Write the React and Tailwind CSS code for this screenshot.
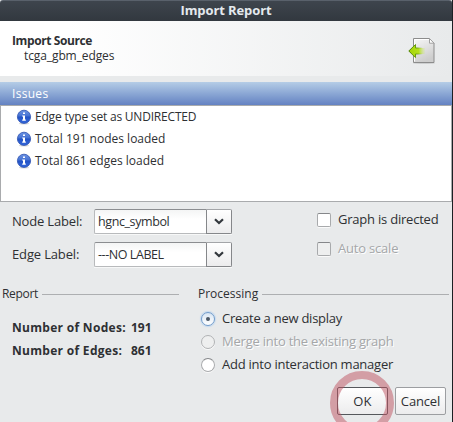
const ISSUES = [
  { text: "Edge type set as UNDIRECTED", cls: "tracking-[-0.2px]" },
  { text: "Total 191 nodes loaded", cls: "" },
  { text: "Total 861 edges loaded", cls: "" },
];

function ImportIcon() {
  return (
    <svg width="28" height="28" viewBox="0 0 28 28" className="shrink-0">
      <defs>
        <linearGradient id="page" x1="0" y1="0" x2="0.4" y2="1">
          <stop offset="0" stopColor="#f8f8f8" />
          <stop offset="1" stopColor="#cdcdcd" />
        </linearGradient>
        <linearGradient id="arrow" x1="0" y1="0" x2="1" y2="0">
          <stop offset="0" stopColor="#a4d407" />
          <stop offset="0.6" stopColor="#b4e01a" />
          <stop offset="1" stopColor="#c9e860" stopOpacity="0.1" />
        </linearGradient>
        <linearGradient id="edge" x1="0" y1="0" x2="1" y2="0">
          <stop offset="0" stopColor="#4e8207" />
          <stop offset="0.5" stopColor="#6fa010" />
          <stop offset="0.85" stopColor="#8fb83a" stopOpacity="0" />
        </linearGradient>
      </defs>
      <ellipse cx="16" cy="26.2" rx="11" ry="0.9" fill="#000" opacity="0.12" />
      <path d="M5.5 1.5H21.5L26 6V25.5H5.5Z" fill="url(#page)" stroke="#8c8c8c" />
      <path d="M6.5 24.5V2.5H21" fill="none" stroke="#fff" />
      <path d="M21.5 1.5V6.2H26Z" fill="#fff" stroke="#a0a0a0" />
      <path d="M0.8 14L7.5 7.5V11H17V17H7.5V20.6Z" fill="url(#arrow)" stroke="url(#edge)" strokeLinejoin="round" />
    </svg>
  );
}

function InfoIcon() {
  return (
    <svg width="16" height="16" viewBox="0 0 16 16" className="shrink-0">
      <defs>
        <linearGradient id="info" x1="0" y1="0" x2="0" y2="1">
          <stop offset="0" stopColor="#6c93e2" />
          <stop offset="0.45" stopColor="#4471d3" />
          <stop offset="0.5" stopColor="#2453c4" />
          <stop offset="1" stopColor="#3468dc" />
        </linearGradient>
      </defs>
      <ellipse cx="8" cy="14.6" rx="5" ry="1" fill="#000" opacity="0.15" />
      <circle cx="8" cy="7.8" r="6.6" fill="url(#info)" stroke="#2a4fae" strokeWidth="0.8" />
      <path d="M7 3.4H9V5H7ZM6.2 6.4H9V10.6H9.8V11.8H6.2V10.6H7V7.6H6.2Z" fill="#fff" />
    </svg>
  );
}

function Combo({ value, className }) {
  return (
    <div className="flex h-[25px] w-[138px] shadow-[0_1px_0_#f7f8f8]">
      <div className="flex w-28 items-center rounded-l-[2px] border border-r-0 border-[#b8babc] border-t-[#8b8d90] bg-linear-to-b from-[#f4f5f5] to-white to-40% pl-[3px]">
        <span className={className}>{value}</span>
      </div>
      <div className="flex flex-1 items-center justify-center rounded-r-[2px] border border-[#85878a] border-t-[#a3a5a8] bg-linear-to-b from-white to-[#ececed]">
        <svg width="10" height="7" viewBox="0 0 10 7">
          <path d="M1 1.2L5 5L9 1.2" fill="none" stroke="#33383d" strokeWidth="2.2" />
        </svg>
      </div>
    </div>
  );
}

function Check({ label, disabled, className }) {
  return (
    <div className={`flex h-[14px] items-center gap-[7px] ${disabled ? "text-[#a5a7a9] [text-shadow:1px_1px_0_#fff]" : ""}`}>
      <div className={`size-[14px] shrink-0 rounded-[2px] border border-[#a8aaac] border-t-[#85878a] shadow-[0_1px_0_#fafafa] ${disabled ? "bg-[#eeefef]" : "bg-white"}`} />
      <div className={`pb-[2px] whitespace-nowrap ${className}`}>{label}</div>
    </div>
  );
}

function Radio({ label, checked, disabled, className }) {
  return (
    <div className={`flex h-[23px] items-center gap-[7px] ${disabled ? "text-[#a5a7a9] [text-shadow:1px_1px_0_#fff]" : ""}`}>
      <div
        className={`flex size-[14px] shrink-0 items-center justify-center rounded-full border ${
          checked
            ? "border-[#6f9bcb] bg-linear-to-b from-[#d8e5f2] to-white shadow-[0_0_1px_1px_#c5d9ee]"
            : disabled
              ? "border-[#b0b2b4] bg-[#eeefef] shadow-[0_1px_0_#fafafa]"
              : "border-[#a8aaac] border-t-[#85878a] bg-white shadow-[0_1px_0_#fafafa]"
        }`}
      >
        {checked && <div className="size-1 rounded-full bg-[#4a5765]" />}
      </div>
      <div className={`pb-[2px] whitespace-nowrap ${className}`}>{label}</div>
    </div>
  );
}

function GroupTitle({ children, className }) {
  return (
    <div className="flex h-4 items-center gap-1 text-[12px]">
      <span className={className}>{children}</span>
      <div className="h-px flex-1 bg-[#adafb1]" />
    </div>
  );
}

const BUTTON =
  "flex h-[28px] w-[51px] items-center justify-center rounded-[2px] border bg-linear-to-b from-white to-[#ececed]";

export default function App() {
  return (
    <div className="h-[422px] w-[453px] overflow-hidden bg-black">
      <div className="flex h-full flex-col border-r border-[#1c2024] bg-[#e8eaeb] font-['Open_Sans','Noto_Sans',sans-serif] text-[13px] leading-4 text-[#2e3033]">
        <div className="flex h-[21px] shrink-0 items-center justify-center rounded-t-[3px] border-t border-[#59616b] bg-linear-to-b from-[#3e454d] to-[#32383f] pb-[2px] font-bold tracking-[-0.1px] text-[#e4e9ee]">
          Import Report
        </div>

        <div className="flex h-[55px] shrink-0 justify-between bg-linear-to-r from-white from-15% to-[#e8eaeb] pr-4 pl-3 text-[12px]">
          <div className="pt-3">
            <div className="font-bold tracking-[-0.4px]">Import Source</div>
            <div className="-mt-px pl-3 tracking-[-0.1px]">tcga_gbm_edges</div>
          </div>
          <div className="pt-4">
            <ImportIcon />
          </div>
        </div>

        <div className="mt-[6px] flex h-[23px] shrink-0 items-center bg-linear-to-b from-[#b5cde6] to-[#6482c2] pl-3 text-[12px] tracking-[0.3px] text-white">
          Issues
        </div>
        <div className="h-[97px] shrink-0 border border-[#a9abad] bg-white pl-[15px] text-[12px]">
          {ISSUES.map((issue) => (
            <div key={issue.text} className="flex h-[22px] items-center gap-[3px]">
              <InfoIcon />
              <span className={issue.cls}>{issue.text}</span>
            </div>
          ))}
        </div>

        <div className="mt-[7px] flex shrink-0 justify-between pr-[13px] pl-3">
          <div className="flex flex-col gap-2">
            <div className="flex items-center">
              <span className="w-[82px] pb-px tracking-[-0.18px]">Node Label:</span>
              <Combo value="hgnc_symbol" className="text-[12.5px] tracking-[-0.4px]" />
            </div>
            <div className="flex items-center">
              <span className="w-[82px] pb-px tracking-[-0.15px]">Edge Label:</span>
              <Combo value="---NO LABEL" className="text-[12.5px] tracking-[-0.43px]" />
            </div>
          </div>
          <div className="flex w-[122px] flex-col gap-[15px] pt-1">
            <Check label="Graph is directed" className="tracking-[-0.22px]" />
            <Check label="Auto scale" disabled className="tracking-[-0.2px]" />
          </div>
        </div>

        <div className="mt-[19px] flex shrink-0">
          <div className="w-[179px] pl-[2px]">
            <GroupTitle className="tracking-[-0.3px]">Report</GroupTitle>
            <div className="pt-[14px] pl-[10px] text-[12px] leading-[23px] font-bold">
              <div className="flex">
                <span className="w-[119px] tracking-[0.3px]">Number of Nodes:</span>
                <span>191</span>
              </div>
              <div className="flex">
                <span className="w-[119px] tracking-[0.3px]">Number of Edges:</span>
                <span>861</span>
              </div>
            </div>
          </div>
          <div className="ml-[19px] w-[251px]">
            <GroupTitle>Processing</GroupTitle>
            <div className="pt-[5px] pl-[3px]">
              <Radio label="Create a new display" checked className="tracking-[-0.25px]" />
              <Radio label="Merge into the existing graph" disabled className="tracking-[-0.22px]" />
              <Radio label="Add into interaction manager" className="tracking-[-0.24px]" />
            </div>
          </div>
        </div>

        <div className="mt-[11px] flex shrink-0 justify-end gap-[7px] pr-[6px]">
          <div className="relative">
            <div className={`${BUTTON} border-[#55585c] tracking-[0.3px]`}>OK</div>
            <div className="absolute -top-4 -left-[7px] size-[64px] rounded-full border-8 border-[#bd5160]/50" />
          </div>
          <div className={`${BUTTON} border-[#9c9ea1] tracking-[-0.15px]`}>Cancel</div>
        </div>
      </div>
    </div>
  );
}
